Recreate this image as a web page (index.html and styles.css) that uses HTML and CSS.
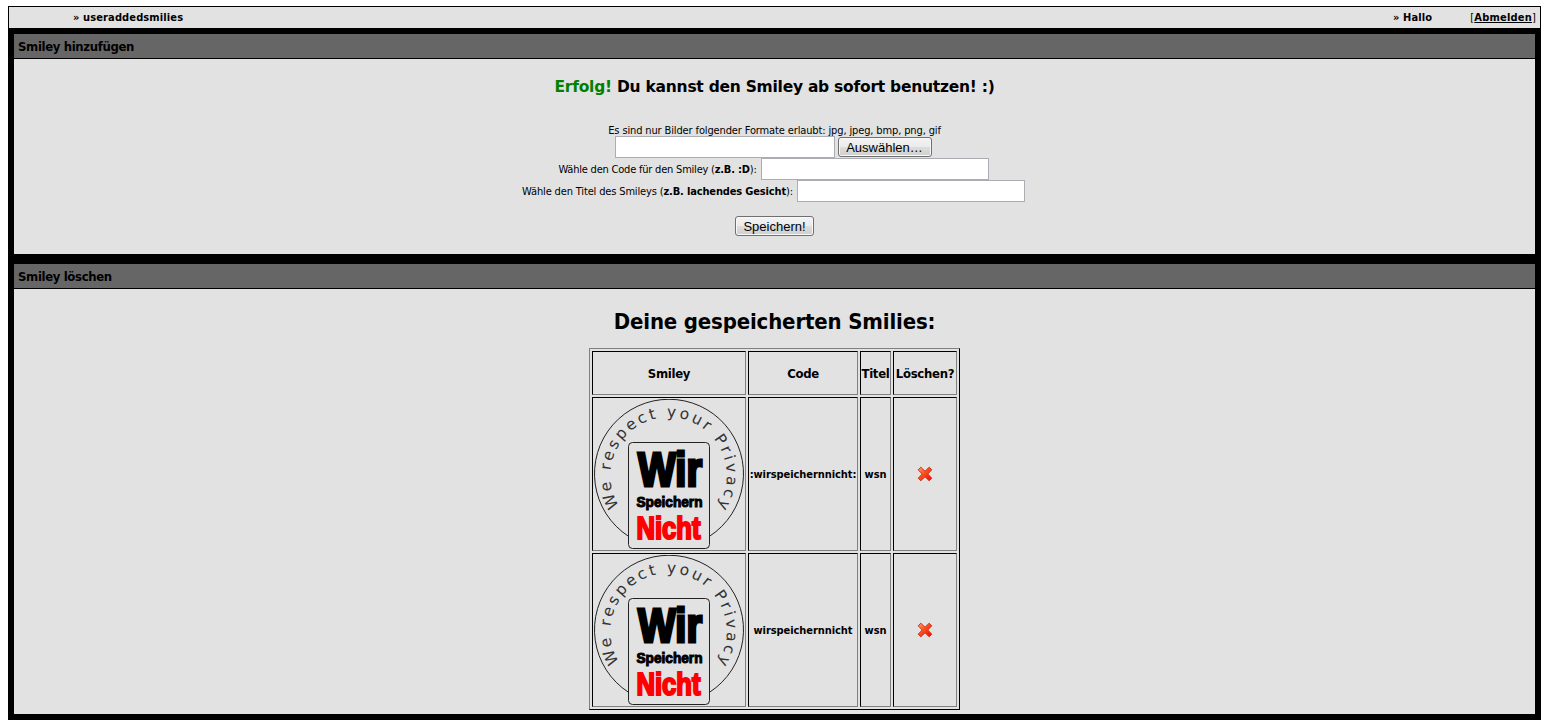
FILE: index.html
```html
<!DOCTYPE html>
<html lang="de">
<head>
<meta charset="utf-8">
<title>useraddedsmilies</title>
<link rel="stylesheet" href="styles.css">
</head>
<body>
<svg class="defs" width="0" height="0" aria-hidden="true">
  <defs>
    <linearGradient id="red" x1="0" y1="0" x2="1" y2="1"><stop offset="0" stop-color="#ffa070"/><stop offset=".45" stop-color="#f8501c"/><stop offset="1" stop-color="#f50000"/></linearGradient>
    <path id="ring" d="M25.1 107.1A58.2 58.2 0 1 1 125.2 105"/>
    <symbol id="badge" viewBox="0 0 150 150">
      <path d="M34.5 137.3A74.5 74.5 0 1 1 115.5 137.3" fill="none" stroke="#222" stroke-width="1"/>
      <rect x="34.5" y="43.5" width="81" height="106" rx="4" fill="none" stroke="#222"/>
      <text class="ring-text" textLength="248"><textPath href="#ring" textLength="248">We respect your Privacy</textPath></text>
      <g class="block-text">
        <text transform="translate(44 86.5)" font-size="48" textLength="64" lengthAdjust="spacingAndGlyphs" stroke="#000" stroke-width="3.2">Wir</text>
        <text transform="translate(42.5 107.5)" font-size="15.5" textLength="66" lengthAdjust="spacingAndGlyphs" stroke="#000" stroke-width="1.1">Speichern</text>
        <text class="nicht" transform="translate(42.5 139.5)" font-size="31.5" textLength="64" lengthAdjust="spacingAndGlyphs" stroke="red" stroke-width="2.2">Nicht</text>
      </g>
    </symbol>
    <symbol id="cross" viewBox="0 0 16 16">
      <path d="M3.8 1.2L8 5.2 12.2 1.2 14.8 3.8 10.8 8 14.8 12.2 12.2 14.8 8 10.8 3.8 14.8 1.2 12.2 5.2 8 1.2 3.8z" fill="url(#red)" stroke="#d5331c" stroke-width="1" stroke-linejoin="round"/>
    </symbol>
  </defs>
</svg>
<div class="page">
  <nav class="topbar">
    <span class="crumb">» useraddedsmilies</span>
    <span class="user">» Hallo</span>
    <span class="logout">[<a href="#">Abmelden</a>]</span>
  </nav>
  <main class="panels">
    <section class="panel">
      <h2 class="panel-title">Smiley hinzufügen</h2>
      <form class="panel-body add">
        <p class="success"><span class="ok">Erfolg!</span> Du kannst den Smiley ab sofort benutzen! :)</p>
        <p class="hint">Es sind nur Bilder folgender Formate erlaubt: jpg, jpeg, bmp, png, gif</p>
        <div class="row file"><span class="input file-name"></span><button class="btn choose" type="button">Auswählen…</button></div>
        <div class="row code"><label for="c">Wähle den Code für den Smiley (<b>z.B. :D</b>):</label><input class="input" id="c"></div>
        <div class="row title"><label for="t">Wähle den Titel des Smileys (<b>z.B. lachendes Gesicht</b>):</label><input class="input" id="t"></div>
        <button class="btn save" type="button">Speichern!</button>
      </form>
    </section>
    <section class="panel">
      <h2 class="panel-title">Smiley löschen</h2>
      <div class="panel-body list">
        <h1 class="list-title">Deine gespeicherten Smilies:</h1>
        <table class="smilies">
          <colgroup><col class="c1"><col class="c2"><col class="c3"><col class="c4"></colgroup>
          <tr class="head"><th>Smiley</th><th>Code</th><th>Titel</th><th>Löschen?</th></tr>
          <tr class="item"><td><svg class="pic" width="150" height="150"><use href="#badge"/></svg></td><td class="txt">:wirspeichernnicht:</td><td class="txt">wsn</td><td><svg class="del" width="16" height="16"><use href="#cross"/></svg></td></tr>
          <tr class="item"><td><svg class="pic" width="150" height="150"><use href="#badge"/></svg></td><td class="txt">wirspeichernnicht</td><td class="txt">wsn</td><td><svg class="del" width="16" height="16"><use href="#cross"/></svg></td></tr>
        </table>
      </div>
    </section>
  </main>
</div>
</body>
</html>
```
FILE: styles.css
```css
* { box-sizing: border-box; }
body { margin: 0; background: #fff; color: #000; font: 11px/14px Tahoma, "DejaVu Sans Condensed", "DejaVu Sans", sans-serif; overflow: hidden; }
h1, h2, p { margin: 0; }
.defs { display: block; width: 0; height: 0; }
.page { width: 1533px; margin: 6px 0 0 8px; }
.topbar { display: flex; height: 22px; border: 1px solid #000; border-bottom: 0; background: #e2e2e2; padding: 4px 4px 0 64px; font-weight: bold; letter-spacing: .12px; white-space: nowrap; }
.crumb { margin-right: auto; }
.user { margin-right: 38px; }
.logout { font-weight: normal; letter-spacing: .2px; }
.logout a { color: #000; font-weight: bold; }
.panels { display: flex; flex-direction: column; gap: 10px; padding: 6px; background: #000; }
.panel-title { height: 24px; padding: 4px 4px 0; background: #666; font-size: 13px; line-height: 17px; letter-spacing: -.36px; }
.panel-body { display: flex; flex-direction: column; align-items: center; margin-top: 1px; background: #e2e2e2; }
.add { height: 195px; }
.list { height: 425px; }
.success { margin-top: 17px; font-family: Tahoma, "DejaVu Sans", sans-serif; font-size: 15.5px; line-height: 22px; font-weight: bold; letter-spacing: -.25px; white-space: nowrap; }
.ok { color: green; }
.hint { margin-top: 26px; line-height: 14px; letter-spacing: -.13px; white-space: nowrap; }
.row { display: flex; align-items: center; height: 22px; gap: 4px; padding-right: 2px; white-space: nowrap; }
.row.file { margin-top: -2px; gap: 3px; padding-right: 3px; }
.row label { padding-top: 2px; }
.code label { letter-spacing: -.21px; }
.title label { letter-spacing: -.15px; }
.input { display: block; width: 228px; height: 22px; margin: 0; padding: 1px; border: 1px solid #abadb3; border-radius: 0; background: #fff; }
.file-name { width: 220px; }
.btn { height: 20px; padding: 1px 0 0; border: 1px solid #707070; border-radius: 3px; background: linear-gradient(#f3f3f3, #ebebeb 50%, #dddddd 50%, #cfcfcf); box-shadow: inset 0 0 0 1px #f8f8f8; color: #000; font: 13px/16px "Liberation Sans", Arial, sans-serif; white-space: nowrap; }
.choose { width: 94px; }
.save { width: 79px; margin-top: 14px; }
.list-title { margin-top: 19px; font-size: 22px; line-height: 28px; letter-spacing: -.16px; white-space: nowrap; }
.smilies { table-layout: fixed; width: 371px; margin-top: 12px; border: 1px solid; border-color: #808080 #000 #000 #808080; border-collapse: separate; border-spacing: 2px; font-weight: bold; text-align: center; }
.c1 { width: 154px; }
.c2 { width: 110px; }
.c3 { width: 31px; }
.c4 { width: 64px; }
.smilies th, .smilies td { padding: 1px; border: 1px solid; border-color: #000 #808080 #808080 #000; white-space: nowrap; }
.smilies .head th { height: 44px; padding: 3px 0 1px; font-size: 13px; letter-spacing: -.3px; }
.item td { height: 154px; }
.smilies .txt { padding: 2px 0 1px; letter-spacing: -.07px; }
.pic, .del { display: block; margin: 0 auto; }
.ring-text { font: 15.5px "DejaVu Sans", sans-serif; fill: #333; }
.block-text { font-family: "Liberation Sans", Arial, sans-serif; font-weight: bold; }
.nicht { fill: red; }
```
